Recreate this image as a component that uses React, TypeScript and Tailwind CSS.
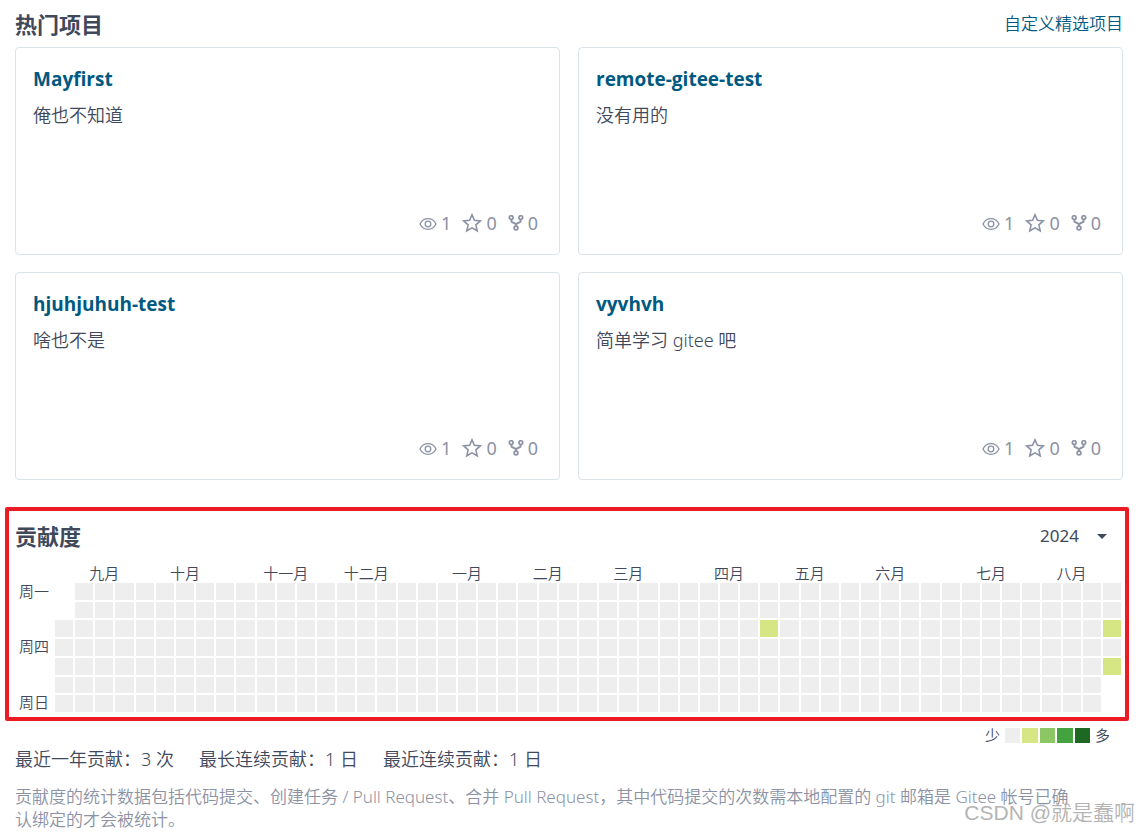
import { useState } from 'react';

type Project = { name: string; description: string; watches: number; stars: number; forks: number };

const projects: Project[] = [
  { name: 'Mayfirst', description: '俺也不知道', watches: 1, stars: 0, forks: 0 },
  { name: 'remote-gitee-test', description: '没有用的', watches: 1, stars: 0, forks: 0 },
  { name: 'hjuhjuhuh-test', description: '啥也不是', watches: 1, stars: 0, forks: 0 },
  { name: 'vyvhvh', description: '简单学习 gitee 吧', watches: 1, stars: 0, forks: 0 },
];

const WEEKS = 53;

const months: Record<number, string> = {
  2: '九月',
  6: '十月',
  11: '十一月',
  15: '十二月',
  20: '一月',
  24: '二月',
  28: '三月',
  33: '四月',
  37: '五月',
  41: '六月',
  46: '七月',
  50: '八月',
};

const weekdays = ['周一', '', '', '周四', '', '', '周日'];

// Days with at least one contribution, keyed as "week-day".
const activeDays = new Set(['35-2', '52-2', '52-4']);

const levels = ['bg-[#eeeeee]', 'bg-[#d6e685]', 'bg-[#8cc665]', 'bg-[#44a340]', 'bg-[#1e6823]'];

function dayColor(week: number, day: number) {
  if ((week === 0 && day < 2) || (week === WEEKS - 1 && day > 4)) return '';
  return activeDays.has(`${week}-${day}`) ? levels[1] : levels[0];
}

function EyeIcon() {
  return (
    <svg className="h-[18px] w-[18px]" viewBox="0 0 18 18" fill="none" stroke="currentColor" strokeWidth="1.3" aria-hidden="true">
      <path d="M1 10C2.600 6.700 5.500 4.700 9 4.700s6.400 2 8 5.300C15.400 13.300 12.500 15.300 9 15.300S2.600 13.300 1 10Z" />
      <circle cx="9" cy="10" r="2.800" />
    </svg>
  );
}

function StarIcon() {
  return (
    <svg className="h-5 w-5" viewBox="0 0 20 20" fill="none" stroke="currentColor" strokeWidth="1.600" aria-hidden="true">
      <path d="M10 1.800 12.400 7.200 18.300 7.900 13.900 11.800 15.200 17.800 10 14.800 4.800 17.800 6.100 11.800 1.700 7.900 7.600 7.200Z" />
    </svg>
  );
}

function ForkIcon() {
  return (
    <svg className="h-4 w-4" viewBox="0 0 16 16" fill="none" stroke="currentColor" strokeWidth="1.700" aria-hidden="true">
      <circle cx="3.200" cy="2.600" r="1.900" />
      <circle cx="12.800" cy="2.600" r="1.900" />
      <circle cx="8" cy="13" r="1.900" />
      <path d="M3.500 4.500V6.600L8 9.100 12.500 6.600V4.500M8 9.100V11.100" strokeWidth="2" />
    </svg>
  );
}

function ProjectCard({ project }: { project: Project }) {
  return (
    <article className="flex h-[208px] flex-col rounded border border-[#dce3e8] px-[17px] pt-[18px] pb-[19px]">
      <h3 className="font-['Open_Sans',sans-serif] text-[19px] leading-[26px] font-bold">
        <a href="#project" className="text-[#005980]">
          {project.name}
        </a>
      </h3>
      <p className="mt-[11px] text-[18px] leading-6">{project.description}</p>
      <div className="mt-auto flex items-center justify-end gap-[11px] pr-1 text-[18px] leading-6 font-normal text-[#8c92a4]">
        <span className="flex items-center gap-1">
          <EyeIcon />
          {project.watches}
        </span>
        <span className="flex items-center gap-1">
          <StarIcon />
          {project.stars}
        </span>
        <span className="flex items-center gap-1">
          <ForkIcon />
          {project.forks}
        </span>
      </div>
    </article>
  );
}

export default function App() {
  const [year, setYear] = useState('2024');

  return (
    <main className="relative overflow-hidden bg-white font-['Noto_Sans','Noto_Sans_CJK_SC',sans-serif] font-[350] text-[#40485b]">
      <section className="pr-4 pl-[15px]">
        <header className="flex h-[47px] items-center justify-between">
          <h2 className="text-[22px] leading-8 font-bold">热门项目</h2>
          <a href="#featured" className="text-[17px] leading-6 text-[#005980]">
            自定义精选项目
          </a>
        </header>
        <div className="grid grid-cols-2 gap-x-[18px] gap-y-[17px]">
          {projects.map((project) => (
            <ProjectCard key={project.name} project={project} />
          ))}
        </div>
      </section>

      <section className="mt-[27px] mr-[10px] ml-[5px] rounded-xs border-4 border-[#ed1c24] pt-[9px] pr-1 pb-[5px] pl-[6px]">
        <header className="flex h-8 items-center justify-between">
          <h2 className="text-[22px] leading-8 font-bold">贡献度</h2>
          <div className="relative mr-[14px]">
            <select
              aria-label="年份"
              value={year}
              onChange={(event) => setYear(event.target.value)}
              className="w-[67px] appearance-none bg-transparent text-[17px] leading-6 font-normal outline-none"
            >
              <option>2024</option>
              <option>2023</option>
            </select>
            <svg className="pointer-events-none absolute top-[10px] right-0 h-[5px] w-[10px]" viewBox="0 0 10 5" aria-hidden="true">
              <path d="M0 0H10L5 5Z" fill="currentColor" />
            </svg>
          </div>
        </header>

        <div className="mt-[11px] grid grid-cols-[40px_minmax(0,1fr)] text-[15px]">
          <div className="col-start-2 grid h-5 grid-cols-[repeat(53,minmax(0,1fr))] gap-x-[2px] leading-5">
            {Array.from({ length: WEEKS }, (_, week) => (
              <span key={week} className="flex justify-center whitespace-nowrap">
                {months[week]}
              </span>
            ))}
          </div>
          <div className="grid h-[127px] grid-rows-7 gap-[2px] pl-1">
            {weekdays.map((label, day) => (
              <span key={day} className="flex items-center leading-4">
                {label}
              </span>
            ))}
          </div>
          <div className="grid h-[129px] grid-flow-col grid-cols-[repeat(53,minmax(0,1fr))] grid-rows-7 gap-[2px]">
            {Array.from({ length: WEEKS * 7 }, (_, i) => (
              <span key={i} className={dayColor(Math.floor(i / 7), i % 7)} />
            ))}
          </div>
        </div>
      </section>

      <section className="pr-4 pl-[15px]">
        <div className="mt-[5px] mr-[13px] flex h-[18px] items-center justify-end gap-[5px] text-[15px] leading-[18px]">
          <span>少</span>
          <div className="grid h-[15px] w-[85px] grid-cols-5 gap-[2px]">
            {levels.map((level) => (
              <span key={level} className={level} />
            ))}
          </div>
          <span>多</span>
        </div>
        <div className="mt-[3px] flex gap-[25px] text-[18px] leading-6">
          <span>最近一年贡献：3 次</span>
          <span>最长连续贡献：1 日</span>
          <span>最近连续贡献：1 日</span>
        </div>
        <p className="mt-[14px] pr-12 text-[17px] leading-[23px] text-[#8c92a4]">
          贡献度的统计数据包括代码提交、创建任务 / Pull Request、合并 Pull Request，其中代码提交的次数需本地配置的 git 邮箱是 Gitee 帐号已确认绑定的才会被统计。
        </p>
      </section>

      <span className="pointer-events-none absolute right-1 bottom-[6px] font-['Liberation_Sans','Noto_Sans_CJK_SC',sans-serif] text-[21px] leading-6 text-[#b4b4b4]">
        CSDN @就是蠢啊
      </span>
    </main>
  );
}
